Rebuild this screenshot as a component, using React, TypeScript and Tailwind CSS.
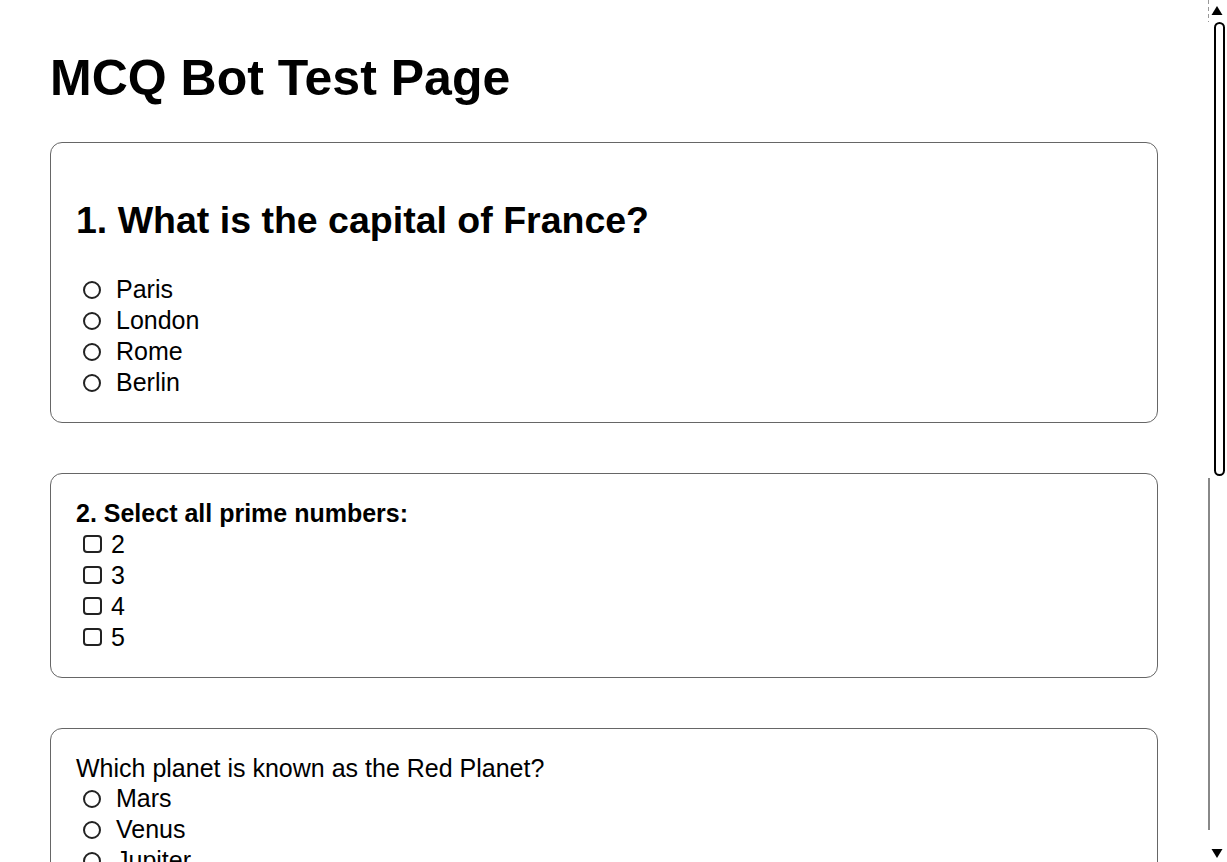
import React from 'react';

type Question = {
  id: string;
  title: string;
  style: 'heading' | 'bold' | 'plain';
  kind: 'radio' | 'checkbox';
  options: string[];
};

const questions: Question[] = [
  { id: 'q1', title: '1. What is the capital of France?', style: 'heading', kind: 'radio', options: ['Paris', 'London', 'Rome', 'Berlin'] },
  { id: 'q2', title: '2. Select all prime numbers:', style: 'bold', kind: 'checkbox', options: ['2', '3', '4', '5'] },
  { id: 'q3', title: 'Which planet is known as the Red Planet?', style: 'plain', kind: 'radio', options: ['Mars', 'Venus', 'Jupiter', 'Saturn'] },
  { id: 'q4', title: '4. Which of these are programming languages?', style: 'bold', kind: 'checkbox', options: ['Python', 'HTML', 'Java', 'CSS'] },
  { id: 'q5', title: '5. What is 2 + 2?', style: 'heading', kind: 'radio', options: ['3', '4', '5', '22'] },
];

function Option({ kind, label }: { kind: 'radio' | 'checkbox'; label: string }) {
  if (kind === 'radio') {
    return (
      <label className="flex items-center h-[31px]">
        <span className="ml-[7px] w-[18px] h-[18px] rounded-full border-2 border-[#222] bg-white shrink-0" />
        <span className="ml-[15px]">{label}</span>
      </label>
    );
  }
  return (
    <label className="flex items-center h-[31px]">
      <span className="ml-[6.5px] w-[19px] h-[18px] rounded-[4px] border-2 border-[#222] bg-white shrink-0" />
      <span className="ml-[9.5px]">{label}</span>
    </label>
  );
}

function QuestionCard({ q }: { q: Question }) {
  return (
    <div className="border border-[#666] rounded-[12px] p-[25px]">
      {q.style === 'heading' && (
        <h2 className="text-[37.5px] font-bold leading-[1.15] mt-[31px] mb-[31px]">{q.title}</h2>
      )}
      {q.style === 'bold' && <div className="font-bold leading-[1.15]">{q.title}</div>}
      {q.style === 'plain' && <div className="leading-[1.15]">{q.title}</div>}
      <div className="flex flex-col pt-[1px] -mb-[1px]">
        {q.options.map((opt) => (
          <Option key={opt} kind={q.kind} label={opt} />
        ))}
      </div>
    </div>
  );
}

// drawn page scrollbar, as it shows in the screenshot
function ScrollBar() {
  return (
    <div className="fixed top-0 right-0 w-[20px] h-screen bg-white pointer-events-none flex flex-col items-center">
      <svg width="20" height="22" viewBox="0 0 20 22" className="shrink-0">
        <line x1="1.5" y1="0" x2="1.5" y2="22" stroke="#999" strokeDasharray="4 3" />
        <path d="M10 6 L15.5 15 L4.5 15 Z" fill="#000" />
      </svg>
      <div className="ml-[4px] w-[11px] h-[454px] rounded-full border-2 border-black bg-white shrink-0" />
      <div className="flex-1 w-full flex">
        <div className="ml-[1px] w-[1.5px] bg-[#888] mt-[2px] mb-[14px]" />
      </div>
      <svg width="20" height="16" viewBox="0 0 20 16" className="shrink-0 mb-[2px]">
        <path d="M10 14 L15.5 5 L4.5 5 Z" fill="#000" />
      </svg>
    </div>
  );
}

export default function App() {
  return (
    <div className="bg-white text-black text-[25px] pl-[50px] pr-[69px] pt-[50px] pb-[50px] font-['Liberation_Sans',Arial,sans-serif]">
      <h1 className="text-[50px] font-bold leading-[1.15] mb-[34.5px]">MCQ Bot Test Page</h1>
      <div className="flex flex-col gap-[50px]">
        {questions.map((q) => (
          <QuestionCard key={q.id} q={q} />
        ))}
      </div>
      <ScrollBar />
    </div>
  );
}
